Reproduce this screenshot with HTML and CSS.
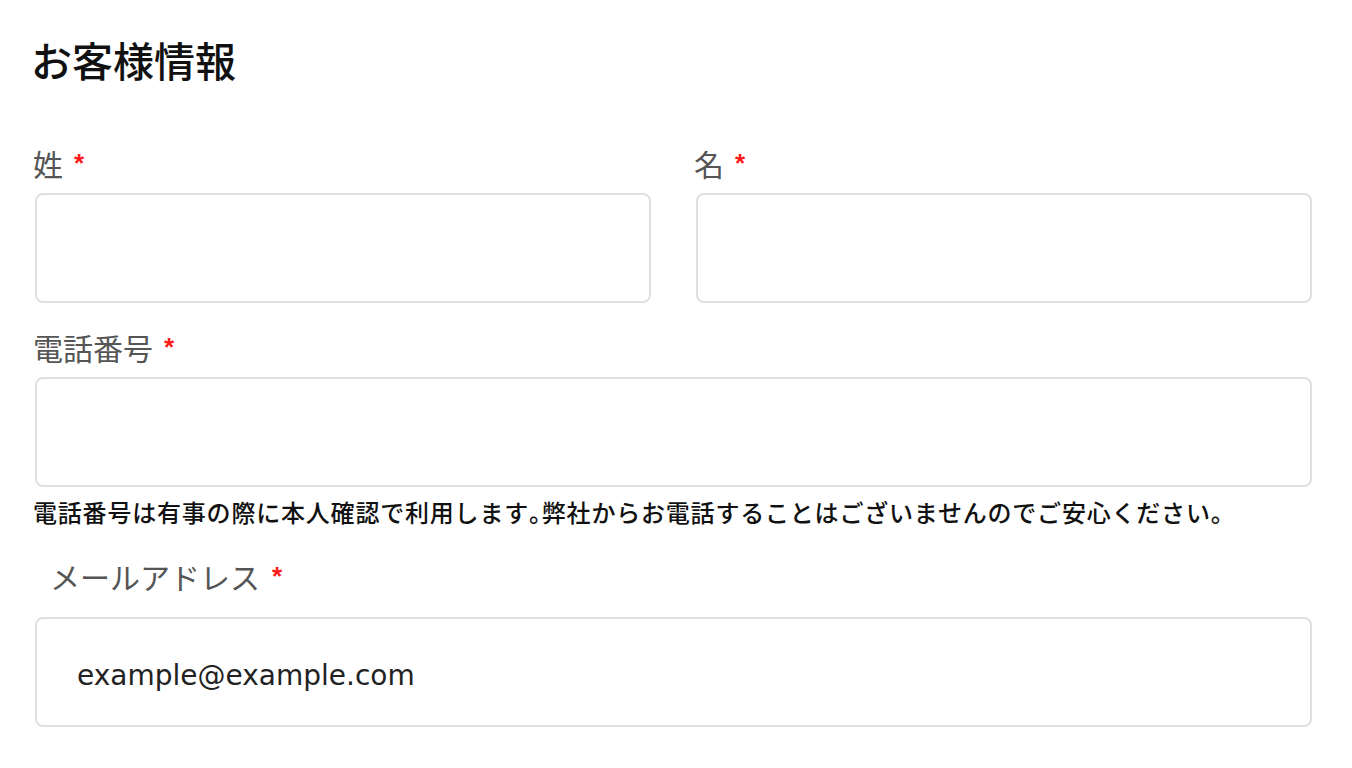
FILE: index.html
```html
<!DOCTYPE html>
<html lang="ja">
<head>
<meta charset="utf-8">
<link rel="stylesheet" href="styles.css">
</head>
<body>
<div class="page">
  <h1 class="title">お客様情報</h1>
  <div class="row">
    <div class="field">
      <label class="label">姓<span class="req">*</span></label>
      <div class="input"></div>
    </div>
    <div class="field">
      <label class="label">名<span class="req">*</span></label>
      <div class="input"></div>
    </div>
  </div>
  <div class="field field-phone">
    <label class="label">電話番号<span class="req">*</span></label>
    <div class="input"></div>
    <p class="help">電話番号は有事の際に本人確認で利用します<span class="halt">。</span>弊社からお電話することはございませんのでご安心ください。</p>
  </div>
  <div class="field field-mail">
    <label class="label label-mail">メールアドレス<span class="req req-tight">*</span></label>
    <div class="input input-mail"><span class="value">example@example.com</span></div>
  </div>
</div>
</body>
</html>
```

FILE: styles.css
```css
* { box-sizing: border-box; }
html, body { margin: 0; padding: 0; background: #fff; }
body {
  font-family: "Noto Sans CJK JP", "Noto Sans", sans-serif;
  color: #222;
}
.page {
  padding: 35px 40px 0 35px;
}
.title {
  margin: 0 0 0 -4px;
  font-size: 41px;
  line-height: 48px;
  font-weight: 500;
  color: #111;
}
.row {
  display: grid;
  grid-template-columns: 1fr 1fr;
  column-gap: 45px;
  margin-top: 60px;
}
.field { display: flex; flex-direction: column; }
.label {
  display: block;
  margin-left: -2px;
  font-size: 30px;
  line-height: 40px;
  color: #555;
  font-weight: 400;
  margin-bottom: 10px;
}
.req {
  font-family: "Liberation Sans", sans-serif;
  font-weight: 700;
  color: #ff1a1a;
  font-size: 26px;
  vertical-align: top;
  margin-left: 11px;
  line-height: 40px;
}
.req-tight { margin-left: 12px; }
.input {
  height: 110px;
  border: 2px solid #e0e0e0;
  border-radius: 8px;
  background: #fff;
  display: flex;
  align-items: center;
}
.field-phone { margin-top: 24px; }
.help {
  margin: 9px 0 0 -2px;
  font-size: 24px;
  line-height: 32px;
  color: #111;
  font-weight: 500;
  letter-spacing: 0.8px;
}
.halt { font-feature-settings: "halt"; }
.field-mail { margin-top: 28px; }
.label-mail {
  padding-left: 17px;
  margin-bottom: 21px;
}
.input-mail { padding-left: 40px; padding-top: 6px; }
.value {
  font-family: "DejaVu Sans", sans-serif;
  font-size: 28px;
  color: #222;
}
```
